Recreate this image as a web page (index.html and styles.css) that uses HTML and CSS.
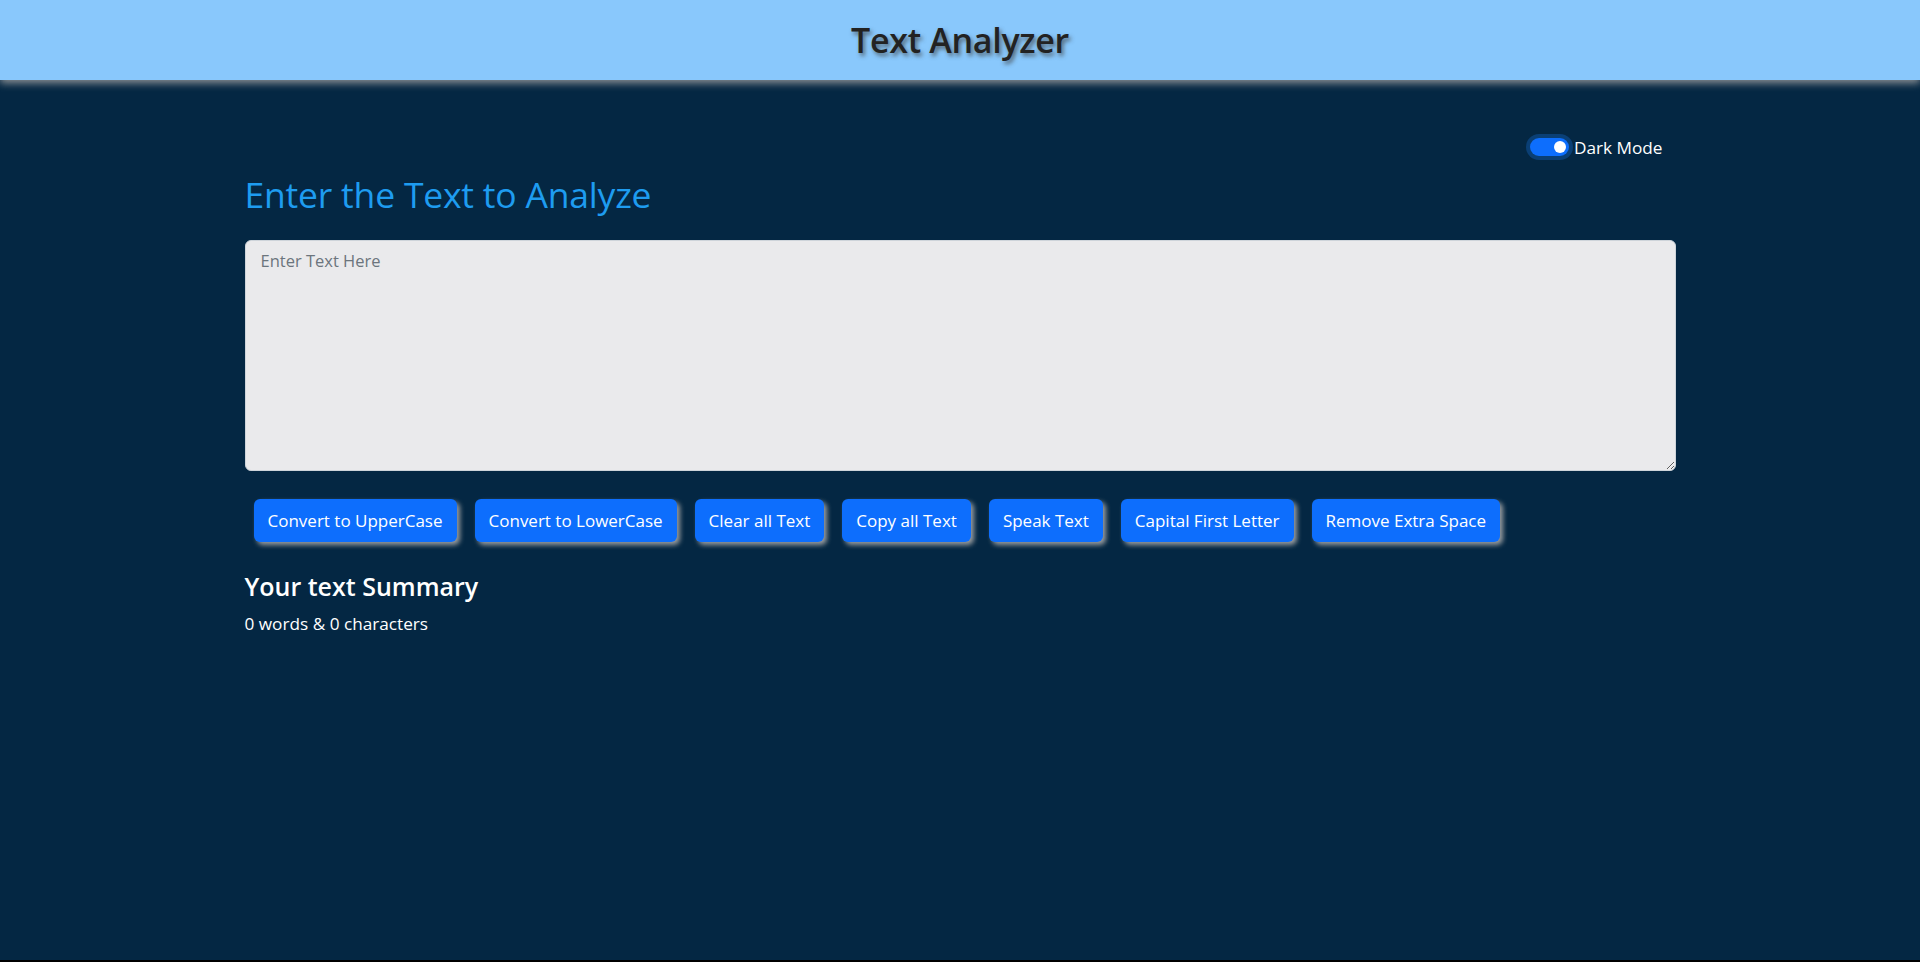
FILE: index.html
```html
<!DOCTYPE html>
<html lang="en">
<head>
<meta charset="utf-8">
<title>Text Analyzer</title>
<link rel="stylesheet" href="styles.css">
</head>
<body>
<header class="topbar">
  <h1 class="brand">Text Analyzer</h1>
</header>
<main class="container">
  <div class="mode-row">
    <label class="switch">
      <span class="track"><span class="knob"></span></span>
      <span class="switch-label">Dark Mode</span>
    </label>
  </div>
  <h2 class="title">Enter the Text to Analyze</h2>
  <textarea class="text-input" placeholder="Enter Text Here"></textarea>
  <div class="actions">
    <button class="btn">Convert to UpperCase</button>
    <button class="btn">Convert to LowerCase</button>
    <button class="btn">Clear all Text</button>
    <button class="btn">Copy all Text</button>
    <button class="btn">Speak Text</button>
    <button class="btn">Capital First Letter</button>
    <button class="btn">Remove Extra Space</button>
  </div>
  <section class="summary">
    <h3 class="summary-title">Your text Summary</h3>
    <p class="summary-text">0 words &amp; 0 characters</p>
  </section>
</main>
</body>
</html>
```

FILE: styles.css
```css
html {
  background: #000;
}
body {
  margin: 0;
  height: 960px;
  background: #042743;
  font-family: "Open Sans", "Noto Sans", Arial, sans-serif;
  color: #fff;
  overflow: hidden;
}
.topbar {
  height: 80px;
  background: #89c8fc;
  box-shadow: 0 3px 8px rgba(160, 160, 160, 0.9);
  display: flex;
  align-items: center;
  justify-content: center;
  position: relative;
  z-index: 1;
}
.brand {
  margin: 0;
  font-size: 34px;
  font-weight: 600;
  color: #222;
  text-shadow: 2px 3px 4px rgba(60, 60, 60, 0.7);
  letter-spacing: -0.3px;
}
.container {
  width: 1431px;
  margin: 0 auto;
  padding-top: 53px;
}
.mode-row {
  display: flex;
  justify-content: flex-end;
  padding-right: 13px;
  height: 28px;
  align-items: center;
}
.switch {
  display: flex;
  align-items: center;
  gap: 5px;
}
.track {
  width: 39px;
  height: 18px;
  border-radius: 9px;
  background: #0d6efd;
  box-shadow: 0 0 0 4px #0a3f75;
  display: flex;
  align-items: center;
  justify-content: flex-end;
  padding-right: 3px;
  box-sizing: border-box;
}
.knob {
  width: 12px;
  height: 12px;
  border-radius: 50%;
  background: #fff;
}
.switch-label {
  font-size: 17.2px;
}
.title {
  margin: 11px 0 0;
  font-size: 35.5px;
  font-weight: 500;
  color: #1e9cf0;
  line-height: 44px;
  letter-spacing: -0.2px;
}
.text-input {
  display: block;
  margin-top: 24px;
  width: 100%;
  height: 231px;
  box-sizing: border-box;
  border: 1px solid #ced4da;
  border-radius: 6px;
  background: #eaeaec;
  padding: 8px 15px;
  font-family: inherit;
  font-size: 16.5px;
  color: #212529;
}
.text-input::placeholder {
  color: #6c757d;
}
.actions {
  display: flex;
  flex-wrap: wrap;
  gap: 18px;
  margin-top: 28px;
  padding-left: 9px;
}
.btn {
  height: 43px;
  padding: 0 14px;
  border: none;
  border-radius: 6px;
  background: #0d6efd;
  color: #fff;
  font-family: inherit;
  font-size: 17px;
  box-shadow: 3px 3px 5px rgba(170, 170, 170, 0.9);
  cursor: pointer;
}
.summary {
  margin-top: 28px;
}
.summary-title {
  margin: 0;
  font-size: 25px;
  font-weight: 600;
  line-height: 32px;
}
.summary-text {
  margin: 10px 0 0;
  font-size: 17.2px;
  line-height: 24px;
}
```
